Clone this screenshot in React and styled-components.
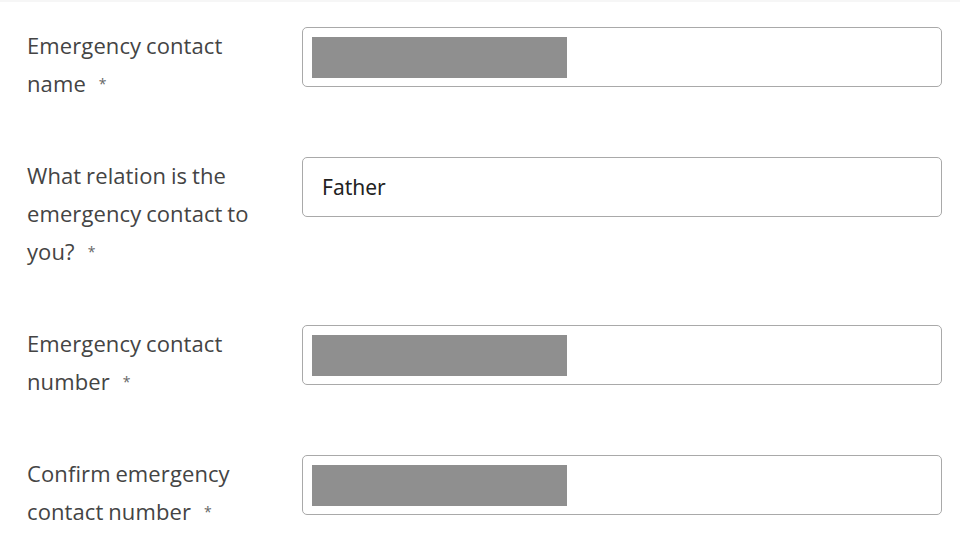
import styled, { createGlobalStyle } from 'styled-components'

const GlobalStyle = createGlobalStyle`
  body {
    margin: 0;
    background: #fff;
    font-family: "Open Sans", "Noto Sans", sans-serif;
  }
`

const fields = [
  { label: 'Emergency contact name', hidden: true },
  { label: 'What relation is the emergency contact to you?', value: 'Father' },
  { label: 'Emergency contact number', hidden: true },
  { label: 'Confirm emergency contact number', hidden: true },
]

const App = () => {
  return (
    <>
      <GlobalStyle />
      <Page>
        <Form>
          {fields.map((f) => (
            <Row key={f.label}>
              <Label>
                {f.label}
                <Required>*</Required>
              </Label>
              <Input>
                {f.hidden ? <Redacted /> : <Value>{f.value}</Value>}
              </Input>
            </Row>
          ))}
        </Form>
      </Page>
    </>
  )
}

export default App

const Page = styled.div`
  width: 960px;
  height: 540px;
  overflow: hidden;
  box-sizing: border-box;
  border-top: 2px solid #f6f6f6;
  padding: 25px 18px 0 27px;
`

const Form = styled.div`
  display: flex;
  flex-direction: column;
  gap: 54px;
`

const Row = styled.div`
  display: flex;
  align-items: flex-start;
`

const Label = styled.div`
  width: 232px;
  margin: -1px 43px 1px 0;
  font-size: 22px;
  line-height: 38px;
  color: #444;
  letter-spacing: 0.1px;
  word-spacing: -1px;
`

const Required = styled.span`
  display: inline-block;
  font-size: 14px;
  line-height: 14px;
  color: #666;
  margin-left: 13px;
  vertical-align: 3px;
`

const Input = styled.div`
  flex: 1;
  height: 60px;
  box-sizing: border-box;
  border: 1px solid #a9a9a9;
  border-radius: 5px;
  display: flex;
  align-items: center;
  padding: 0 9px;
`

const Redacted = styled.div`
  width: 255px;
  height: 41px;
  background: #8f8f8f;
`

const Value = styled.span`
  font-family: "Noto Sans", "Open Sans", sans-serif;
  font-size: 21px;
  color: #222;
  padding-left: 10px;
`
